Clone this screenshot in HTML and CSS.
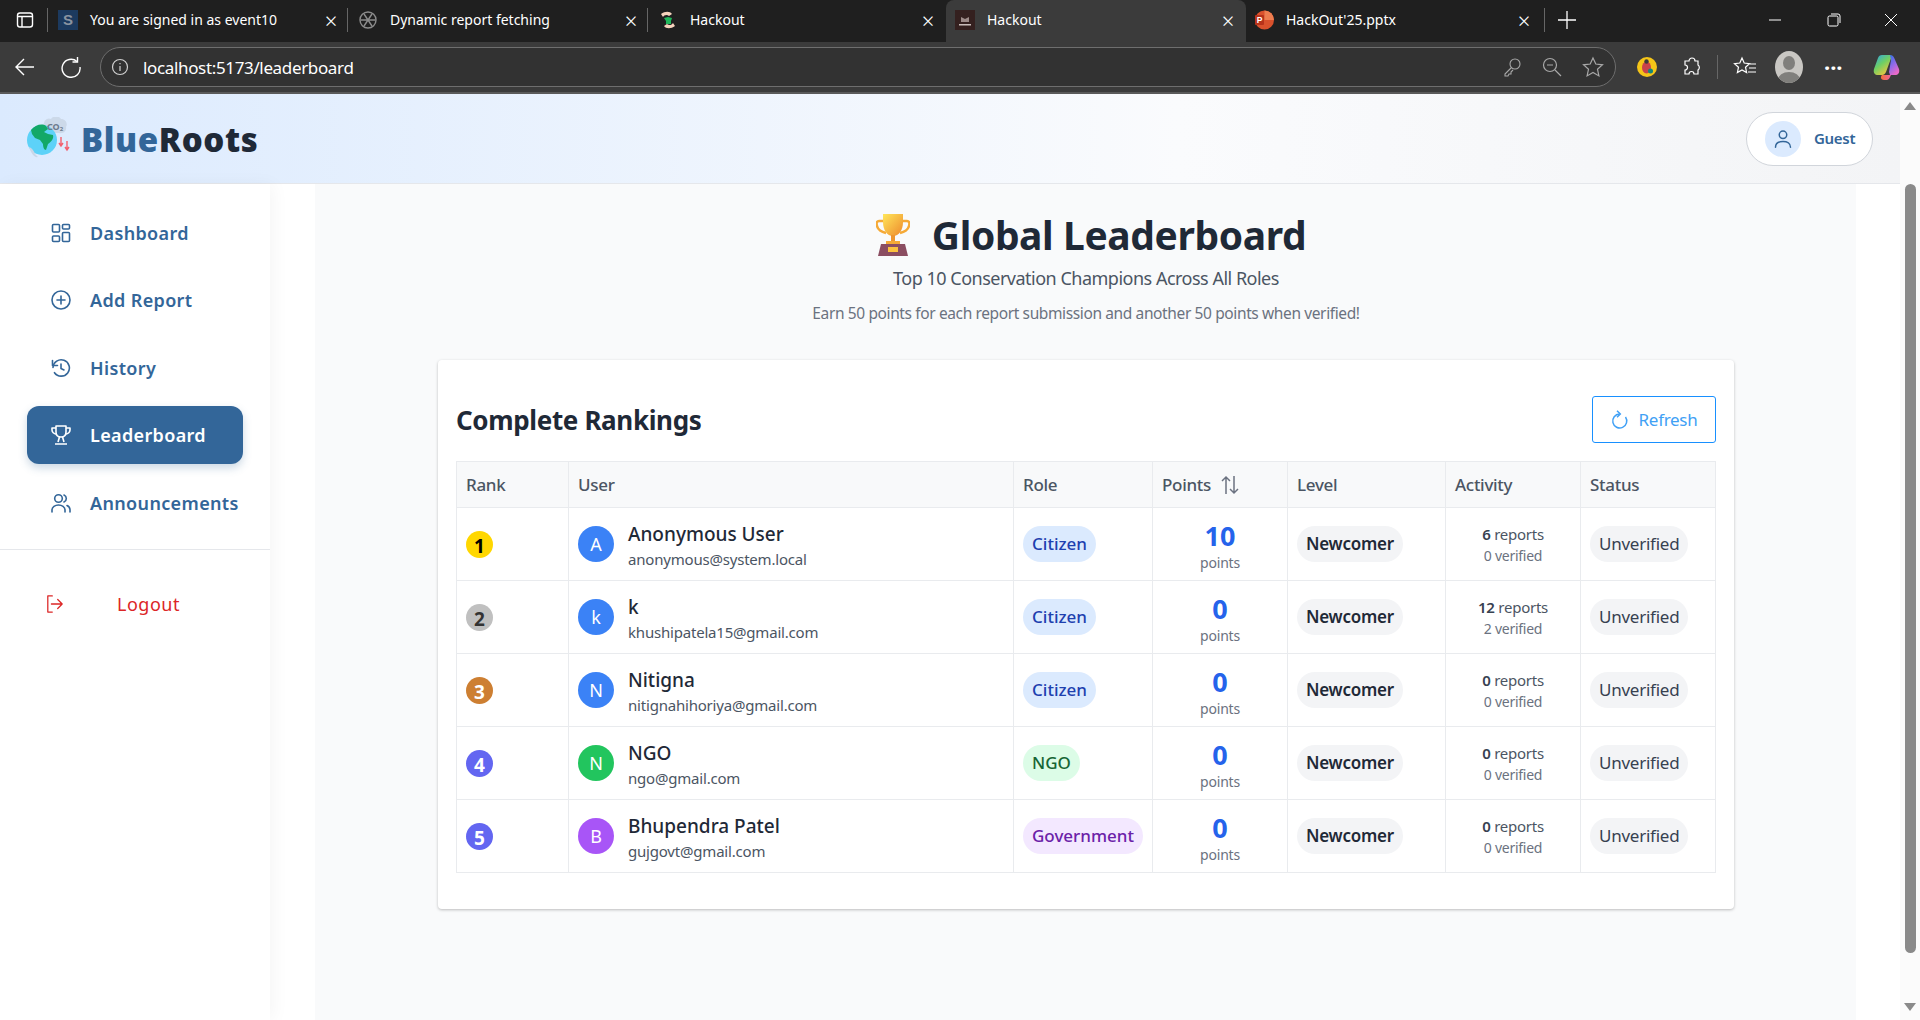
FILE: index.html
```html
<!DOCTYPE html>
<html lang="en">
<head>
  <meta charset="UTF-8" />
  <meta name="viewport" content="width=device-width, initial-scale=1.0"/>
  <title>Leaderboard</title>
  <link rel="stylesheet" href="styles.css">
</head>
<body>
  <!-- browser frame -->
  <div class="tabbar">
    <div class="tab-toggle">
      <svg width="20" height="20" viewBox="0 0 20 20" fill="none" stroke="#fff" stroke-width="1.4"><rect x="2.5" y="3" width="15" height="14" rx="2.5"/><path d="M2.5 6.5h15M7 6.5V17"/></svg>
    </div>
    <div class="tab tab-sep tab-wide">
      <svg class="favicon" viewBox="0 0 20 20"><rect width="20" height="20" fill="#1c3a5f"/><text x="10" y="15" text-anchor="middle" font-size="15" font-weight="700" fill="#8a93a0" font-family="Liberation Sans">S</text></svg>
      <span class="tab-title">You are signed in as event10</span>
      <span class="tab-close">&times;</span>
    </div>
    <div class="tab tab-sep tab-wide">
      <svg class="favicon" viewBox="0 0 20 20" fill="none" stroke="#8c8c8c" stroke-width="1.4"><circle cx="10" cy="10" r="8"/><path d="M6 4l8 12M14 4L6 16M2.500 10h15"/></svg>
      <span class="tab-title">Dynamic report fetching</span>
      <span class="tab-close">&times;</span>
    </div>
    <div class="tab tab-sep">
      <svg class="favicon" viewBox="0 0 20 20"><path d="M3 4c4-3 9-3 11 0l-3 2C9 4 6 5 5 7z" fill="#f6d3bd"/><path d="M17 16c-4 3-9 3-11 0l3-2c2 2 5 1 6-1z" fill="#f6d3bd"/><path d="M6 8l4-1 4 1-1 3v3H8v-3z" fill="#20b65a"/></svg>
      <span class="tab-title">Hackout</span>
      <span class="tab-close">&times;</span>
    </div>
    <div class="tab tab-active">
      <svg class="favicon" viewBox="0 0 20 20"><rect width="20" height="20" fill="#34201f"/><path d="M6 12V7l4 2 4-2v5z" fill="#9c8a88"/><rect x="4" y="14" width="12" height="1.500" fill="#c9bdbb"/></svg>
      <span class="tab-title">Hackout</span>
      <span class="tab-close">&times;</span>
    </div>
    <div class="tab tab-last">
      <svg class="favicon" viewBox="0 0 20 20"><circle cx="10.500" cy="10" r="9.500" fill="#d9512c"/><path d="M10.500 .5a9.500 9.500 0 0 1 9.500 9.500h-9.500z" fill="#ed7d4f"/><rect x="1" y="5" width="9" height="10" rx="1" fill="#b7321a"/><text x="5.500" y="13" text-anchor="middle" font-size="8.500" font-weight="700" fill="#fff" font-family="Liberation Sans">P</text></svg>
      <span class="tab-title">HackOut'25.pptx</span>
      <span class="tab-close">&times;</span>
    </div>
    <div class="new-tab">
      <svg width="20" height="20" viewBox="0 0 20 20" stroke="#fff" stroke-width="1.300"><path d="M10 1v18M1 10h18"/></svg>
    </div>
    <div class="win-buttons">
      <svg class="win-min" width="14" height="14" viewBox="0 0 14 14" stroke="#fff" stroke-width="1"><path d="M1 7h12"/></svg>
      <svg width="14" height="14" viewBox="0 0 14 14" fill="none" stroke="#fff" stroke-width="1"><rect x="1" y="3" width="10" height="10" rx="1.500"/><path d="M4 1h7a2 2 0 0 1 2 2v7"/></svg>
      <svg width="14" height="14" viewBox="0 0 14 14" stroke="#fff" stroke-width="1"><path d="M1 1l12 12M13 1L1 13"/></svg>
    </div>
  </div>

  <div class="toolbar">
    <svg class="tool-nav" width="22" height="22" viewBox="0 0 22 22" fill="none" stroke="#fff" stroke-width="1.400"><path d="M20 11H2M10 3l-8 8 8 8"/></svg>
    <svg class="tool-nav" width="22" height="22" viewBox="0 0 22 22" fill="none" stroke="#fff" stroke-width="1.400"><path d="M17 5.500A9 9 0 1 0 20 11"/><path d="M17.500 1v5h-5"/></svg>
    <div class="addressbar">
      <svg width="18" height="18" viewBox="0 0 18 18" fill="none" stroke="#d0d0d0" stroke-width="1.200"><circle cx="9" cy="9" r="7.500"/><path d="M9 8v5M9 5v1.300"/></svg>
      <span class="url">localhost:5173/leaderboard</span>
      <div class="address-icons">
        <svg width="20" height="20" viewBox="0 0 20 20" fill="none" stroke="#a8a8a8" stroke-width="1.100"><circle cx="13" cy="7" r="5"/><path d="M9.500 10.500L3 17v2h3l1-2h2v-2l2-2"/></svg>
        <svg width="20" height="20" viewBox="0 0 20 20" fill="none" stroke="#a8a8a8" stroke-width="1.200"><circle cx="8" cy="8" r="6.500"/><path d="M5 8h6M13 13l6 6"/></svg>
        <svg width="22" height="22" viewBox="0 0 22 22" fill="none" stroke="#a8a8a8" stroke-width="1.200"><path d="M11 2l2.800 6 6.700.8-5 4.500 1.400 6.600L11 16.500 5.100 19.900l1.400-6.600-5-4.500L8.200 8z"/></svg>
      </div>
    </div>
    <div class="tool-icons">
      <svg class="ext-bug" width="20" height="20" viewBox="0 0 20 20"><circle cx="10" cy="10" r="10" fill="#f5c518"/><ellipse cx="9.500" cy="10.500" rx="4.500" ry="6" fill="#c9434a"/><circle cx="9.500" cy="4.500" r="2.200" fill="#3b3b3b"/><circle cx="13.500" cy="14" r="2.500" fill="#12867c"/></svg>
      <svg class="ext-puzzle" width="20" height="20" viewBox="0 0 20 20" fill="none" stroke="#fff" stroke-width="1.200"><path d="M7 4a3 3 0 0 1 6 0h3v4a3 3 0 0 1 0 5v4h-4a2.500 2.500 0 0 0-5 0H3v-4a2.500 2.500 0 0 0 0-5V4z"/></svg>
      <span class="tool-sep"></span>
      <svg class="ext-fav" width="24" height="22" viewBox="0 0 24 22" fill="none" stroke="#fff" stroke-width="1.200"><path d="M9 2l2.200 5 5.300.6-4 3.600 1.100 5.300L9 14l-4.600 2.500 1.100-5.300-4-3.600L6.800 7zM17 8h6M16 12h7M15 16h8"/></svg>
      <span class="profile"><span class="profile-head"></span><span class="profile-body"></span></span>
      <span class="tool-dots">&middot;&middot;&middot;</span>
      <svg class="copilot" width="28" height="28" viewBox="0 0 28 28">
        <defs>
          <linearGradient id="copilotA" x1="0" y1="0" x2="0.700" y2="1"><stop offset="0" stop-color="#2aa4ee"/><stop offset=".5" stop-color="#6fcf63"/><stop offset="1" stop-color="#f6c63c"/></linearGradient>
          <linearGradient id="copilotB" x1="0" y1="0" x2="0.500" y2="1"><stop offset="0" stop-color="#2f6fe8"/><stop offset=".6" stop-color="#9a6ae6"/><stop offset="1" stop-color="#e86ac8"/></linearGradient>
          <linearGradient id="copilotC" x1="0" y1="0" x2="1" y2="0"><stop offset="0" stop-color="#f0703a"/><stop offset="1" stop-color="#ee5f9e"/></linearGradient>
        </defs>
        <path d="M9 2h8c1 0 2 1 1.500 2L13 19c-1 2-2 3-4 3H5c-3 0-5-2-4-6L5 5c.7-2 2-3 4-3z" fill="url(#copilotA)"/>
        <path d="M17 2c2 0 3.500 1 4.200 3L26 16c1 4-1 6-4 6h-5l-1-3 2-12z" fill="url(#copilotB)"/>
        <path d="M9 22h9l-1.500 3c-.7 1.500-2 2-3.500 2h-2c-3 0-4-3-2-5z" fill="url(#copilotC)"/>
      </svg>
    </div>
  </div>

  <div class="viewport">
    <div class="app">
      <header class="app-header">
        <div class="brand">
          <svg class="logo" width="46" height="42" viewBox="0 0 44 42">
            <path d="M18 6a5 5 0 0 1 7-4 6 6 0 0 1 10 0c5 0 7 5 5 8 1 4-3 7-7 6H24c-5 0-8-6-6-10z" fill="#ccd9e9"/>
            <circle cx="16" cy="23" r="15" fill="#5dd2f8"/>
            <path d="M5 13c4-5 11-7 15-4l2 3-4 3 4 2 5 1c1 4-2 7-5 9l-2 6c-2 0-3-3-3-6l-3-4-5-2-3-4z" fill="#12a868"/>
            <path d="M3 30c3 1 5 4 6 7l3 3c-4 1-7-4-9-10z" fill="#c9d7e8"/>
            <text x="29" y="13" text-anchor="middle" font-size="9" font-weight="700" fill="#6b7a8c" font-family="Noto Sans">CO<tspan font-size="6" dy="1">2</tspan></text>
            <path d="M35 20v9M33 26l2 3 2-3M41 24v9M39 30l2 3 2-3" fill="none" stroke="#f2606e" stroke-width="1.400"/>
          </svg>
          <span class="brand-name"><span class="brand-blue">Blue</span>Roots</span>
        </div>
        <div class="user-pill">
          <span class="user-avatar">
            <svg width="20" height="20" viewBox="0 0 24 24" fill="none" stroke="#336699" stroke-width="1.800" stroke-linecap="round"><circle cx="12" cy="7" r="4.500"/><path d="M3 22c0-5 4-7 9-7s9 2 9 7"/></svg>
          </span>
          <span class="user-name">Guest</span>
        </div>
      </header>

      <div class="app-body">
        <aside class="sidebar">
          <nav class="nav">
            <a class="nav-item">
              <svg class="nav-icon" viewBox="0 0 20 20" fill="none" stroke="currentColor" stroke-width="1.600"><rect x="1.500" y="1.500" width="7" height="7.500" rx="1"/><rect x="11.500" y="1.500" width="7" height="4.500" rx="1"/><rect x="1.500" y="13" width="7" height="5.500" rx="1"/><rect x="11.500" y="9.500" width="7" height="9" rx="1"/></svg>
              Dashboard
            </a>
            <a class="nav-item">
              <svg class="nav-icon" viewBox="0 0 20 20" fill="none" stroke="currentColor" stroke-width="1.600" stroke-linecap="round"><circle cx="10" cy="10" r="9"/><path d="M10 6v8M6 10h8"/></svg>
              Add Report
            </a>
            <a class="nav-item">
              <svg class="nav-icon" viewBox="0 0 20 20" fill="none" stroke="currentColor" stroke-width="1.600" stroke-linecap="round" stroke-linejoin="round"><path d="M2 9.500a8.200 8.200 0 1 1 1.500 5.200"/><path d="M1.500 2.500v5h5"/><path d="M10 6v4.500l3 1.500"/></svg>
              History
            </a>
            <a class="nav-item nav-active">
              <svg class="nav-icon" viewBox="0 0 20 20" fill="none" stroke="currentColor" stroke-width="1.600" stroke-linejoin="round"><path d="M5 1h10v6c0 3-2 5-5 5S5 10 5 7z"/><path d="M5 3H1v2c0 2 2 4 4 4M15 3h4v2c0 2-2 4-4 4M8.500 12l-1.500 5M11.500 12l1.500 5M4 19h12"/></svg>
              Leaderboard
            </a>
            <a class="nav-item">
              <svg class="nav-icon" viewBox="0 0 20 20" fill="none" stroke="currentColor" stroke-width="1.600" stroke-linecap="round"><circle cx="7.500" cy="5.500" r="3.800"/><path d="M1 19v-2c0-3 3-5 6.500-5s6.500 2 6.500 5v2M13 2a3.800 3.800 0 0 1 0 7M16 12.500c2 .8 3 2.500 3 4.500v2"/></svg>
              Announcements
            </a>
          </nav>
          <div class="sidebar-foot">
            <a class="logout">
              <svg class="logout-icon" viewBox="0 0 20 20" fill="none" stroke="currentColor" stroke-width="1.400" stroke-linecap="round" stroke-linejoin="round"><path d="M7 1H2v18h5M6 10h12M13 5l5 5-5 5"/></svg>
              Logout
            </a>
          </div>
        </aside>

        <main class="main">
          <div class="content">
            <h1 class="page-title">
              <svg class="trophy" width="34" height="42" viewBox="0 0 34 42">
                <defs>
                  <linearGradient id="cup" x1="0" y1="0" x2="1" y2="1"><stop offset="0" stop-color="#ffe65a"/><stop offset="1" stop-color="#ee8a2c"/></linearGradient>
                </defs>
                <path d="M8 7H3c-2 0-3 2-2 5 1 4 5 6 9 7M26 7h5c2 0 3 2 2 5-1 4-5 6-9 7" fill="none" stroke="#f5a936" stroke-width="2.500"/>
                <path d="M7 0h20v8c0 8-4 14-10 14S7 16 7 8z" fill="url(#cup)"/>
                <rect x="15" y="21" width="4" height="8" fill="#ee962f"/>
                <rect x="10" y="27" width="14" height="3" fill="#f5a936"/>
                <path d="M5 30h24l3 12H2z" fill="#8b4d61"/>
                <rect x="12" y="33" width="10" height="5" fill="#fcc13e"/>
              </svg>
              Global Leaderboard
            </h1>
            <p class="page-sub">Top 10 Conservation Champions Across All Roles</p>
            <p class="page-note">Earn 50 points for each report submission and another 50 points when verified!</p>

            <section class="card">
              <div class="card-head">
                <h2 class="card-title">Complete Rankings</h2>
                <button class="refresh">
                  <svg width="18" height="20" viewBox="0 0 18 20" fill="none" stroke="currentColor" stroke-width="1.500"><path d="M14.500 7A7 7 0 1 1 8.500 4"/><path d="M6 .8l3.300 3.200L6 7.200"/></svg>
                  Refresh
                </button>
              </div>
              <table class="rank-table">
                <colgroup>
                  <col class="col-rank"><col class="col-user"><col class="col-role"><col class="col-points"><col class="col-level"><col class="col-activity"><col class="col-status">
                </colgroup>
                <thead>
                  <tr>
                    <th>Rank</th>
                    <th>User</th>
                    <th>Role</th>
                    <th>
                      <span class="sort-head">Points
                        <svg width="20" height="20" viewBox="0 0 20 20" fill="none" stroke="#6b7280" stroke-width="1.500"><path d="M6 19V2M2 6l4-4 4 4M14 1v17M10 14l4 4 4-4"/></svg>
                      </span>
                    </th>
                    <th>Level</th>
                    <th>Activity</th>
                    <th>Status</th>
                  </tr>
                </thead>
                <tbody>
                  <tr>
                    <td><span class="medal medal-gold">1</span></td>
                    <td><div class="user-cell"><span class="avatar av-blue">A</span><div class="user-text"><div class="u-name">Anonymous User</div><div class="u-mail">anonymous@system.local</div></div></div></td>
                    <td><span class="pill role-citizen">Citizen</span></td>
                    <td class="points-cell"><div class="pts">10</div><div class="pts-label">points</div></td>
                    <td><span class="pill pill-level">Newcomer</span></td>
                    <td class="activity-cell"><div class="reports"><b>6</b> reports</div><div class="verified">0 verified</div></td>
                    <td><span class="pill pill-status">Unverified</span></td>
                  </tr>
                  <tr>
                    <td><span class="medal medal-silver">2</span></td>
                    <td><div class="user-cell"><span class="avatar av-blue">k</span><div class="user-text"><div class="u-name">k</div><div class="u-mail">khushipatela15@gmail.com</div></div></div></td>
                    <td><span class="pill role-citizen">Citizen</span></td>
                    <td class="points-cell"><div class="pts">0</div><div class="pts-label">points</div></td>
                    <td><span class="pill pill-level">Newcomer</span></td>
                    <td class="activity-cell"><div class="reports"><b>12</b> reports</div><div class="verified">2 verified</div></td>
                    <td><span class="pill pill-status">Unverified</span></td>
                  </tr>
                  <tr>
                    <td><span class="medal medal-bronze">3</span></td>
                    <td><div class="user-cell"><span class="avatar av-blue">N</span><div class="user-text"><div class="u-name">Nitigna</div><div class="u-mail">nitignahihoriya@gmail.com</div></div></div></td>
                    <td><span class="pill role-citizen">Citizen</span></td>
                    <td class="points-cell"><div class="pts">0</div><div class="pts-label">points</div></td>
                    <td><span class="pill pill-level">Newcomer</span></td>
                    <td class="activity-cell"><div class="reports"><b>0</b> reports</div><div class="verified">0 verified</div></td>
                    <td><span class="pill pill-status">Unverified</span></td>
                  </tr>
                  <tr>
                    <td><span class="medal medal-other">4</span></td>
                    <td><div class="user-cell"><span class="avatar av-green">N</span><div class="user-text"><div class="u-name">NGO</div><div class="u-mail">ngo@gmail.com</div></div></div></td>
                    <td><span class="pill role-ngo">NGO</span></td>
                    <td class="points-cell"><div class="pts">0</div><div class="pts-label">points</div></td>
                    <td><span class="pill pill-level">Newcomer</span></td>
                    <td class="activity-cell"><div class="reports"><b>0</b> reports</div><div class="verified">0 verified</div></td>
                    <td><span class="pill pill-status">Unverified</span></td>
                  </tr>
                  <tr>
                    <td><span class="medal medal-other">5</span></td>
                    <td><div class="user-cell"><span class="avatar av-purple">B</span><div class="user-text"><div class="u-name">Bhupendra Patel</div><div class="u-mail">gujgovt@gmail.com</div></div></div></td>
                    <td><span class="pill role-gov">Government</span></td>
                    <td class="points-cell"><div class="pts">0</div><div class="pts-label">points</div></td>
                    <td><span class="pill pill-level">Newcomer</span></td>
                    <td class="activity-cell"><div class="reports"><b>0</b> reports</div><div class="verified">0 verified</div></td>
                    <td><span class="pill pill-status">Unverified</span></td>
                  </tr>
                </tbody>
              </table>
            </section>
          </div>
        </main>
      </div>
    </div>

    <div class="scrollbar">
      <span class="arrow-up"></span>
      <span class="thumb"></span>
      <span class="arrow-down"></span>
    </div>
  </div>
</body>
</html>
```

FILE: styles.css
```css
* {
  box-sizing: border-box;
}
body {
  margin: 0;
  height: 1020px;
  overflow: hidden;
  font-family: "Noto Sans", sans-serif;
  background: #fff;
  color: #1f2937;
}

/* browser frame */
.tabbar {
  display: flex;
  align-items: stretch;
  height: 42px;
  background: #1f1f1f;
  color: #fff;
}
.tab-toggle {
  width: 46px;
  padding: 0 0 3px 15px;
  display: flex;
  align-items: center;
}
.tab {
  width: 300px;
  padding: 0 8px 3px 12px;
  display: flex;
  align-items: center;
  gap: 12px;
  position: relative;
  font-size: 14px;
}
.tab-wide {
  padding-right: 5px;
}
.tab-sep::before {
  content: "";
  width: 1px;
  height: 24px;
  background: #666;
  position: absolute;
  left: 1px;
  top: 8px;
}
.tab-active {
  background: #3b3b3b;
  border-radius: 8px 8px 0 0;
  padding-left: 9px;
}
.tab-last {
  width: 298px;
  padding-left: 8px;
  padding-right: 10px;
}
.favicon {
  width: 20px;
  height: 20px;
  flex: none;
}
.tab-title {
  flex: 1;
}
.tab-close {
  font-size: 22px;
  font-weight: 300;
  line-height: 1;
  width: 20px;
  text-align: center;
}
.new-tab {
  position: relative;
  padding: 0 0 3px 13px;
  display: flex;
  align-items: center;
}
.new-tab::before {
  content: "";
  width: 1px;
  height: 24px;
  background: #666;
  position: absolute;
  left: 0;
  top: 8px;
}
.win-buttons {
  margin-left: auto;
  padding: 0 22px 2px 0;
  display: flex;
  align-items: center;
  gap: 43px;
}
.win-min {
  margin-right: 2px;
}
.toolbar {
  height: 52px;
  background: #3b3b3b;
  border-bottom: 2px solid #5a5a5a;
  display: flex;
  align-items: center;
  padding: 0 14px;
}
.tool-nav {
  margin-right: 24px;
}
.tool-nav + .tool-nav {
  margin-right: 20px;
}
.addressbar {
  width: 1516px;
  height: 40px;
  margin-left: -2px;
  background: #323232;
  border: 1px solid #6e6e6e;
  border-radius: 20px;
  display: flex;
  align-items: center;
  padding: 0 11px 0 10px;
  gap: 14px;
  color: #fff;
}
.url {
  font-size: 17px;
  letter-spacing: -0.35px;
}
.address-icons {
  margin-left: auto;
  display: flex;
  align-items: center;
  gap: 20px;
}
.tool-icons {
  display: flex;
  align-items: center;
  flex: 1;
}
.ext-bug {
  margin-left: 21px;
}
.ext-puzzle {
  margin-left: 25px;
}
.tool-sep {
  width: 1px;
  height: 24px;
  background: #666;
  margin: 0 15px;
}
.profile {
  width: 28px;
  height: 32px;
  border-radius: 50%;
  background: #c9c7c3;
  margin-left: 18px;
  position: relative;
  overflow: hidden;
}
.profile-head {
  position: absolute;
  left: 8px;
  top: 5px;
  width: 12px;
  height: 14px;
  border-radius: 50%;
  background: #807f7c;
}
.profile-body {
  position: absolute;
  left: 3px;
  top: 21px;
  width: 22px;
  height: 16px;
  border-radius: 50%;
  background: #807f7c;
}
.tool-dots {
  color: #fff;
  font-size: 22px;
  font-weight: 700;
  margin-left: 21px;
  width: 20px;
  line-height: 1;
}
.copilot {
  margin-left: 29px;
}

/* page */
.viewport {
  display: flex;
  height: 926px;
}
.app {
  flex: 1;
  min-width: 0;
  display: flex;
  flex-direction: column;
}
.app-header {
  height: 90px;
  flex: none;
  display: flex;
  align-items: center;
  justify-content: space-between;
  padding: 0 27px 0 25px;
  background: linear-gradient(90deg, #dbeafe 0%, #fafbfd 62%, #f3f4f6 100%);
  border-bottom: 1px solid #e5e7eb;
}
.brand {
  display: flex;
  align-items: center;
  gap: 10px;
}
.logo {
  margin-top: -2px;
}
.brand-name {
  font-size: 33px;
  font-weight: 900;
  color: #1f2937;
  letter-spacing: 0.6px;
  padding-top: 1px;
}
.brand-blue {
  color: #336699;
}
.user-pill {
  width: 127px;
  height: 54px;
  border-radius: 27px;
  background: #fff;
  border: 1px solid #d1d5db;
  display: flex;
  align-items: center;
  padding-left: 18px;
  gap: 13px;
}
.user-avatar {
  width: 36px;
  height: 36px;
  border-radius: 50%;
  background: #dbeafe;
  display: flex;
  align-items: center;
  justify-content: center;
}
.user-name {
  font-size: 15px;
  font-weight: 600;
  color: #336699;
  letter-spacing: -0.3px;
  padding-bottom: 2px;
}
.app-body {
  flex: 1;
  display: flex;
  min-height: 0;
}
.sidebar {
  width: 270px;
  flex: none;
  background: #fff;
  box-shadow: 4px 0 16px rgba(0, 0, 0, 0.04);
  position: relative;
}
.nav {
  padding: 19px 27px 18px;
  display: flex;
  flex-direction: column;
  gap: 9.5px;
}
.nav-item {
  height: 58px;
  padding: 1px 0 0 24px;
  display: flex;
  align-items: center;
  gap: 19px;
  font-size: 18px;
  font-weight: 600;
  color: #336699;
  border-radius: 12px;
  white-space: nowrap;
  letter-spacing: 0.35px;
}
.nav-active {
  background: #336699;
  color: #fff;
  box-shadow: 0 4px 8px rgba(51, 102, 153, 0.25);
}
.nav-icon {
  width: 20px;
  height: 20px;
  flex: none;
}
.sidebar-foot {
  border-top: 1px solid #e5e7eb;
  padding: 25px 46px;
}
.logout {
  height: 58px;
  display: flex;
  align-items: center;
  gap: 53px;
  color: #dc2626;
  font-size: 18px;
  letter-spacing: 0.5px;
}
.logout-icon {
  width: 18px;
  height: 18px;
  flex: none;
}
.main {
  flex: 1;
  min-width: 0;
  padding: 0 44px 0 45px;
}
.content {
  height: 100%;
  background: #f9fafb;
  padding: 27px 122px 0 123px;
}
.page-title {
  margin: 0 0 7px;
  height: 48px;
  font-size: 39px;
  font-weight: 700;
  line-height: 48px;
  color: #1f2937;
  display: flex;
  align-items: center;
  justify-content: center;
  gap: 22px;
  letter-spacing: -0.4px;
}
.trophy {
  margin-left: 10px;
}
.page-sub {
  margin: 0;
  text-align: center;
  font-size: 18px;
  line-height: 24px;
  color: #4b5563;
  letter-spacing: -0.5px;
}
.page-note {
  margin: 12px 0 36px;
  text-align: center;
  font-size: 15.5px;
  line-height: 22px;
  color: #6b7280;
  letter-spacing: -0.38px;
}
.card {
  background: #fff;
  height: 549px;
  padding: 36px 19px 36px 18px;
  border-radius: 4px;
  box-shadow: 0 1px 3px rgba(0, 0, 0, 0.25);
}
.card-head {
  display: flex;
  align-items: center;
  justify-content: space-between;
  margin-bottom: 18px;
}
.card-title {
  margin: 0;
  font-size: 26px;
  font-weight: 700;
  color: #1f2937;
  letter-spacing: -0.35px;
}
.refresh {
  width: 124px;
  height: 47px;
  margin-right: -1px;
  background: #fff;
  border: 1px solid #1890ff;
  border-radius: 3px;
  color: #40a0f5;
  font-family: inherit;
  font-size: 17px;
  display: flex;
  align-items: center;
  justify-content: center;
  gap: 10px;
  letter-spacing: -0.3px;
}

/* table */
.rank-table {
  width: 100%;
  table-layout: fixed;
  border-collapse: collapse;
}
.col-rank { width: 112px; }
.col-user { width: 445px; }
.col-role { width: 139px; }
.col-points { width: 135px; }
.col-level { width: 158px; }
.col-activity { width: 135px; }
.col-status { width: 135px; }
.rank-table th,
.rank-table td {
  border: 1px solid #e9ebee;
  padding: 0 9px;
  text-align: left;
}
.rank-table th {
  height: 46px;
  background: #f8f9fa;
  font-size: 17px;
  font-weight: 500;
  color: #4b5563;
  letter-spacing: -0.3px;
}
.rank-table td {
  height: 73px;
}
.sort-head {
  display: flex;
  align-items: center;
  gap: 9px;
}
.medal {
  display: flex;
  align-items: center;
  justify-content: center;
  width: 27px;
  height: 27px;
  border-radius: 50%;
  font-size: 19px;
  font-weight: 700;
  padding-top: 3px;
}
.medal-gold { background: #ffd700; color: #000; }
.medal-silver { background: #c0c0c0; color: #333; }
.medal-bronze { background: #cd7f32; color: #fff; }
.medal-other { background: #6366f1; color: #fff; }
.user-cell {
  display: flex;
  align-items: center;
  gap: 14px;
}
.user-text {
  padding-top: 3px;
}
.avatar {
  width: 36px;
  height: 36px;
  flex: none;
  border-radius: 50%;
  color: #fff;
  font-size: 18px;
  display: flex;
  align-items: center;
  justify-content: center;
}
.av-blue { background: #3b82f6; }
.av-green { background: #22c55e; }
.av-purple { background: #a855f7; }
.u-name {
  font-size: 19px;
  font-weight: 500;
  line-height: 25px;
  color: #1f2937;
}
.u-mail {
  font-size: 15px;
  line-height: 22px;
  margin-top: 1px;
  color: #4b5563;
  letter-spacing: -0.2px;
}
.pill {
  display: inline-flex;
  align-items: center;
  height: 36px;
  padding: 0 9px 2px;
  border-radius: 18px;
  font-size: 17px;
  font-weight: 500;
  vertical-align: middle;
}
.role-citizen { background: #dbeafe; color: #1e40af; }
.role-ngo { background: #dcfce7; color: #166534; }
.role-gov { background: #f3e8ff; color: #6b21a8; }
.pill-level { background: #f3f4f6; color: #1f2937; font-weight: 600; letter-spacing: -0.25px; }
.pill-status { background: #f3f4f6; color: #374151; font-weight: 400; letter-spacing: -0.25px; }
.points-cell,
.activity-cell {
  text-align: center !important;
}
.pts {
  font-size: 27px;
  font-weight: 700;
  line-height: 32px;
  color: #2563eb;
  padding-top: 4px;
}
.pts-label {
  font-size: 14px;
  line-height: 20px;
  margin-top: 1px;
  color: #6b7280;
  letter-spacing: -0.2px;
}
.reports {
  font-size: 15px;
  line-height: 21px;
  padding-top: 2px;
  color: #4b5563;
  letter-spacing: -0.25px;
}
.reports b {
  font-weight: 600;
  color: #374151;
}
.verified {
  font-size: 14px;
  line-height: 20px;
  margin-top: 1px;
  color: #6b7280;
  letter-spacing: -0.25px;
}

/* window scrollbar */
.scrollbar {
  width: 20px;
  flex: none;
  background: #fbfbfb;
  display: flex;
  flex-direction: column;
  align-items: center;
  position: relative;
  padding-top: 8px;
}
.arrow-up,
.arrow-down {
  width: 0;
  height: 0;
  border-left: 6px solid transparent;
  border-right: 6px solid transparent;
}
.arrow-up {
  border-bottom: 8px solid #8a8a8a;
}
.arrow-down {
  border-top: 8px solid #8a8a8a;
  margin-top: 50px;
}
.thumb {
  width: 11px;
  height: 769px;
  margin-top: 74px;
  background: #8a8a8a;
  border-radius: 6px;
}
```
